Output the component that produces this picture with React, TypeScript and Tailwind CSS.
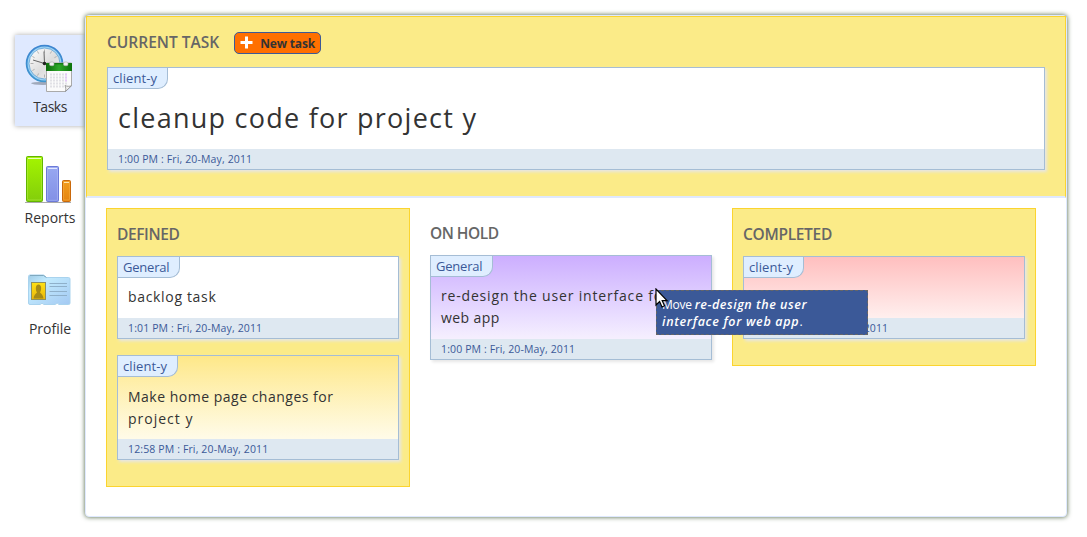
import type { ReactNode } from "react";

type Tint = "white" | "yellow" | "violet" | "red";

const tints: Record<Tint, string> = {
  white: "bg-white",
  yellow: "bg-linear-to-b from-[#fee888] to-[#fffbe8] to-80%",
  violet: "bg-linear-to-b from-[#ccaeff] to-[#f5effe] to-80%",
  red: "bg-linear-to-b from-[#ffbfbf] to-[#ffefee] to-75%",
};

const labels: Record<string, string> = {
  General: "w-[62px] tracking-[-0.2px]",
  "client-y": "w-[60px] tracking-[0.1px]",
};

function TaskCard({ label, tint, date, tall, children }: { label: string; tint: Tint; date: string; tall: string; children?: ReactNode }) {
  return (
    <article className={`flex flex-col border border-[#a5bdd5] shadow-[2px_2px_3px_#e6e6e6] ${tall} ${tints[tint]}`}>
      <div className={`h-[21px] shrink-0 rounded-br-[10px] border-r border-b border-[#a5bdd5] bg-[#dfeeff] pl-[5px] text-[13px] leading-[21px] whitespace-nowrap text-[#3b5998] ${labels[label]}`}>
        {label}
      </div>
      <div className="flex-1 pl-[10px] text-[#333]">{children}</div>
      <footer className="h-[20px] shrink-0 bg-[#dee8f1] pl-[10px] text-[10.5px] leading-[20px] tracking-[0.13px] text-[#3b5998]">{date}</footer>
    </article>
  );
}

function Heading({ children, className }: { children: ReactNode; className: string }) {
  return <h2 className={`text-[15.5px] leading-[20px] font-semibold whitespace-nowrap text-[#666] ${className}`}>{children}</h2>;
}

function ClockIcon() {
  return (
    <svg width="50" height="50" viewBox="0 0 50 50">
      <defs>
        <linearGradient id="rim" x1="0" y1="0" x2="0" y2="1"><stop offset="0" stopColor="#3d85d0" /><stop offset="1" stopColor="#3f96cf" /></linearGradient>
        <linearGradient id="dial" x1="0" y1="0" x2="1" y2="1"><stop offset="0" stopColor="#fff" /><stop offset=".55" stopColor="#ddd" /><stop offset="1" stopColor="#f6f6f6" /></linearGradient>
        <linearGradient id="calTop" x1="0" y1="0" x2="1" y2="0"><stop offset="0" stopColor="#0b6b0b" /><stop offset=".5" stopColor="#2fa82a" /><stop offset="1" stopColor="#0b720b" /></linearGradient>
      </defs>
      <ellipse cx="19" cy="39.3" rx="12" ry="1.6" fill="#6b7484" opacity=".55" />
      <circle cx="20.500" cy="19.500" r="17.900" fill="#9bd3f5" stroke="url(#rim)" strokeWidth="1.800" />
      <circle cx="20.500" cy="19.500" r="15.500" fill="url(#dial)" stroke="#5b9fd6" strokeWidth=".8" />
      <path d="M20.500 5.500v3M20.500 30.500v3M6.500 19.500h3M31.500 19.500h3M13.500 7.400l1.200 2.200M27.500 7.400l-1.200 2.200M8.400 12.500l2.200 1.200M32.600 12.500l-2.200 1.200M8.400 26.500l2.200-1.200M13.500 31.600l1.200-2.200" stroke="#aaa" strokeWidth=".9" />
      <path d="M20.500 19.500L20 7.500M20.500 19.500L9 16" stroke="#555" strokeWidth=".9" />
      <circle cx="20.500" cy="19.500" r="1.800" fill="#222" />
      <path d="M22.500 19h25v22.500l-6 6h-19z" fill="#fbfbfb" stroke="#aaa" />
      <path d="M22 19h26v8H22z" fill="url(#calTop)" />
      <path d="M22 19h26v1.300H22z" fill="#157a13" />
      <rect x="25.500" y="18" width="4.500" height="3.700" rx="1.500" fill="#f1f1f1" stroke="#aaa" strokeWidth=".6" />
      <rect x="39.500" y="18" width="4.500" height="3.700" rx="1.500" fill="#f1f1f1" stroke="#aaa" strokeWidth=".6" />
      <path d="M26 30.500h17M26 33.500h17M26 36.500h17M26 39.500h17M26 42.500h14" stroke="#e1e1e6" strokeWidth="2" strokeDasharray="2 1" />
      <path d="M42 29.500v9" stroke="#e3c8f7" strokeWidth="2" strokeDasharray="2 1" />
      <path d="M41.500 47.500c.5-2.500.3-4-.5-6 2 1 4.500 1 6.500.300z" fill="#f0f0f0" stroke="#888" strokeWidth=".8" />
    </svg>
  );
}

function ChartIcon() {
  return (
    <svg width="50" height="50" viewBox="0 0 50 50">
      <defs>
        <linearGradient id="green" x1="0" y1="0" x2="0" y2="1"><stop offset="0" stopColor="#a4f500" /><stop offset="1" stopColor="#83cd0b" /></linearGradient>
        <linearGradient id="blue" x1="0" y1="0" x2="0" y2="1"><stop offset="0" stopColor="#98a8f1" /><stop offset="1" stopColor="#8290e6" /></linearGradient>
        <linearGradient id="orange" x1="0" y1="0" x2="0" y2="1"><stop offset="0" stopColor="#f29d1b" /><stop offset="1" stopColor="#e58511" /></linearGradient>
      </defs>
      <path d="M1 47.500h46" stroke="#aaa" strokeWidth="1.200" />
      <rect x="2.500" y="1.500" width="16" height="45" rx="1" fill="url(#green)" stroke="#62b500" />
      <rect x="3.500" y="3" width="14" height="42" rx="1.500" fill="none" stroke="#b9f34c" strokeWidth=".5" />
      <path d="M4 3.500h13" stroke="#e8ffbd" />
      <rect x="22.500" y="11.500" width="12" height="35" rx="1" fill="url(#blue)" stroke="#6c7ad8" />
      <rect x="23.500" y="12.800" width="10" height="32.500" rx="1" fill="none" stroke="#b0bcf7" strokeWidth=".5" />
      <path d="M24 13.500h9" stroke="#e2e7ff" />
      <rect x="38.500" y="25.500" width="8" height="21" rx="1" fill="url(#orange)" stroke="#c9680b" />
      <rect x="39.500" y="27" width="6" height="18" rx="1" fill="none" stroke="#f6b14b" strokeWidth=".5" />
      <path d="M40 27.500h5" stroke="#ffe4ae" />
    </svg>
  );
}

function ProfileIcon() {
  return (
    <svg width="50" height="50" viewBox="0 0 50 50">
      <defs>
        <linearGradient id="folder" x1="0" y1="0" x2="1" y2="1"><stop offset="0" stopColor="#9fcbe6" /><stop offset=".3" stopColor="#c2eafd" /><stop offset="1" stopColor="#a3c9f3" /></linearGradient>
        <linearGradient id="photo" x1="0" y1="0" x2="0" y2="1"><stop offset="0" stopColor="#ffe115" /><stop offset="1" stopColor="#eab70b" /></linearGradient>
      </defs>
      <path d="M4.500 10.500q0-1.500 1.500-1.500h13.500l3 2.500h22q1.500 0 1.500 1.500v24q0 1.500-1.500 1.500H35q-1.500-2.500-4 0H20q-2-2.500-4 0H6q-1.500 0-1.500-1.500z" fill="url(#folder)" stroke="#a9d3ee" />
      <path d="M6 9.500h13.500l3 2" fill="none" stroke="#7fa9bf" />
      <rect x="7.500" y="16.500" width="14" height="17" fill="url(#photo)" stroke="#8e9160" />
      <path d="M9.500 32.500c.5-3 1.500-4.500 3.500-6-1.500-2-2-8 1.500-8s3 6 1.500 8c2 1.500 3 3 3.500 6z" fill="#a68b16" />
      <path d="M25.500 17.500h17.500M25.500 20.500h17.500M25.500 25.500h17.500M25.500 29.500h17.500" stroke="#8fb0ca" />
    </svg>
  );
}

function NavItem({ icon, label, active, className }: { icon: ReactNode; label: string; active?: boolean; className?: string }) {
  return (
    <a className={`flex h-[91px] w-[70px] flex-col items-center pt-[9px] text-[14px] text-[#333] ${active ? "bg-[#dfe9ff] shadow-[0_0_5px_#aaa]" : ""}`}>
      <span className="-ml-[2px] h-[50px]">{icon}</span>
      <span className={`mt-[3px] leading-[20px] ${className ?? ""}`}>{label}</span>
    </a>
  );
}

export default function App() {
  return (
    <div className="flex h-[537px] w-[1087px] overflow-hidden bg-white pl-[15px] font-['Open_Sans',sans-serif]">
      <nav className="flex w-[70px] flex-col gap-[20px] pt-[35px]">
        <NavItem active icon={<ClockIcon />} label="Tasks" className="tracking-[-0.5px]" />
        <NavItem icon={<ChartIcon />} label="Reports" />
        <NavItem icon={<ProfileIcon />} label="Profile" />
      </nav>
      <main className="relative mt-[15px] h-[502px] w-[982px] rounded-[4px] border border-[#dfe9ff] bg-white shadow-[0_0_5px_#4b6340]">
        <section className="h-[182px] border border-b-2 border-[#fbd42f] border-b-[#dfe9ff] bg-[#fbeb88] pt-[15px] pl-[20px]">
          <div className="flex h-[22px] items-center gap-[15px]">
            <Heading className="mt-[-2px]">CURRENT TASK</Heading>
            <button className="flex h-[22px] w-[87px] items-center rounded-[5px] border border-[#3b5998] bg-[#ff7000] pl-[5px] text-[12px] font-bold text-[#333]">
              <svg width="14" height="14" viewBox="0 0 14 14" className="mr-[6px] shrink-0"><path d="M6.500 .5v12M.5 6.500h12" stroke="#fff" strokeWidth="3" /></svg>
              <span className="mt-[1px] tracking-[-0.15px] whitespace-nowrap">New task</span>
            </button>
          </div>
          <div className="mt-[13px] w-[938px]">
            <TaskCard tall="h-[103px]" label="client-y" tint="white" date="1:00 PM : Fri, 20-May, 2011">
              <p className="pt-[9px] text-[27px] leading-[40px] tracking-[1.25px]">cleanup code for project y</p>
            </TaskCard>
          </div>
        </section>
        <div className="mt-[10px] flex items-start gap-[10px] pl-[20px]">
          <section className="w-[304px] border border-[#fbd42f] bg-[#fbeb88] px-[10px] pt-[15px] pb-[26px]">
            <Heading className="tracking-[-0.4px]">DEFINED</Heading>
            <div className="mt-[12px] flex flex-col gap-[16px]">
              <TaskCard tall="h-[83px]" label="General" tint="white" date="1:01 PM : Fri, 20-May, 2011">
                <p className="pt-[8px] text-[14px] leading-[22px] tracking-[0.67px]">backlog task</p>
              </TaskCard>
              <TaskCard tall="h-[105px]" label="client-y" tint="yellow" date="12:58 PM : Fri, 20-May, 2011">
                <p className="pt-[9px] text-[14px] leading-[22px] tracking-[0.5px]">Make home page changes for<br /><span className="tracking-[1px]">project y</span></p>
              </TaskCard>
            </div>
          </section>
          <section className="w-[302px] px-[10px] pt-[15px]">
            <Heading className="tracking-[-0.5px]">ON HOLD</Heading>
            <div className="mt-[12px]">
              <TaskCard tall="h-[105px]" label="General" tint="violet" date="1:00 PM : Fri, 20-May, 2011">
                <p className="pt-[8px] text-[14px] leading-[22px] tracking-[0.82px] whitespace-nowrap">re-design the user interface for<br /><span className="tracking-[0.4px]">web app</span></p>
              </TaskCard>
            </div>
          </section>
          <section className="w-[304px] border border-[#fbd42f] bg-[#fbeb88] px-[10px] pt-[15px] pb-[26px]">
            <Heading className="tracking-[-0.3px]">COMPLETED</Heading>
            <div className="mt-[12px]">
              <TaskCard tall="h-[83px]" label="client-y" tint="red" date="1:00 PM : Fri, 20-May, 2011" />
            </div>
          </section>
        </div>
        <div className="absolute top-[274px] left-[570px] h-[45px] w-[212px] border border-dashed border-[#666] bg-[#3b5998] pt-[5px] pl-[5px] text-[12px] leading-[17px] whitespace-nowrap text-white">
          <span className="tracking-[-0.25px]">Move </span><b className="text-[12.5px] font-semibold tracking-[0.55px] italic">re-design the user</b><br />
          <b className="text-[12.5px] font-semibold tracking-[0.7px] italic">interface for web app</b>.
        </div>
        <svg className="absolute top-[272px] left-[569px]" width="14" height="20" viewBox="0 0 14 20">
          <path d="M1 1v16l3.600-3.400 2.400 5.400 2.500-1.200-2.300-5.200H12z" fill="#fff" stroke="#000" strokeWidth="1.200" />
        </svg>
      </main>
    </div>
  );
}
